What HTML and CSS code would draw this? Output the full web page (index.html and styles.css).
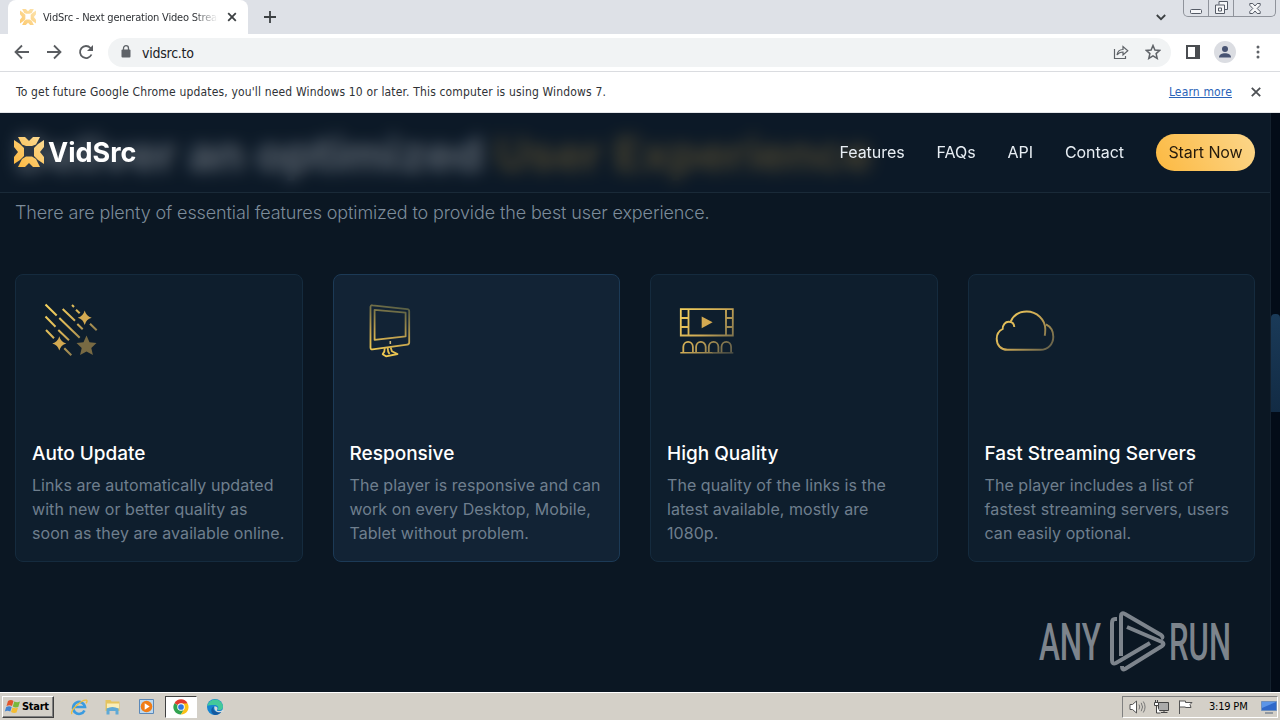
FILE: index.html
```html
<!DOCTYPE html>
<html lang="en">

<head>
    <meta charset="UTF-8">
    <meta name="viewport" content="width=device-width, initial-scale=1.0">
    <title>VidSrc - Next generation Video Streaming</title>
    <link rel="stylesheet" href="styles.css">
</head>

<body>
    <svg width="0" height="0" class="defs">
        <defs>
            <linearGradient id="gold" x1="0" y1="0" x2="60" y2="60" gradientUnits="userSpaceOnUse">
                <stop offset="0" stop-color="#ffdd60" />
                <stop offset="0.5" stop-color="#cfab55" />
                <stop offset="1" stop-color="#444a48" />
            </linearGradient>
            <linearGradient id="goldUp" x1="14" y1="54" x2="30" y2="0" gradientUnits="userSpaceOnUse">
                <stop offset="0" stop-color="#f7d052" />
                <stop offset="0.4" stop-color="#c2a24f" />
                <stop offset="1" stop-color="#505a44" />
            </linearGradient>
            <linearGradient id="logo" x1="0" y1="1" x2="1" y2="0">
                <stop offset="0" stop-color="#fdb73c" />
                <stop offset="1" stop-color="#fbdc97" />
            </linearGradient>
            <symbol id="mark" viewBox="0 0 30 30">
                <path fill="url(#logo)" d="M4 0h7l4 4 4-4h7l-4 7.500-4 1.500h-6L8 7.500zM4 30h7l4-4 4 4h7l-4-8-4-2.500h-6L8 22zM0 3l6 4 4 4v8l-4 4-6 4v-7l4-5-4-5zM30 3l-6 4-4 4v8l4 4 6 4v-7l-4-5 4-5z" />
            </symbol>
        </defs>
    </svg>

    <div class="screen">
        <div class="tab-strip">
            <div class="tab">
                <svg class="favicon" width="16" height="16"><use href="#mark" /></svg>
                <span class="tab-title">VidSrc - Next generation Video Streaming</span>
                <svg class="tab-close" width="10" height="10" viewBox="0 0 10 10"><path d="M1.2 1.2l7.6 7.6M8.8 1.2L1.2 8.8" /></svg>
            </div>
            <svg class="new-tab" width="12" height="12" viewBox="0 0 12 12"><path d="M6 0v12M0 6h12" /></svg>
            <svg class="tab-search" width="10" height="7" viewBox="0 0 10 7"><path d="M.8 1L5 5.2 9.200 1" /></svg>
            <div class="window-buttons">
                <span class="win-btn win-min"><svg width="12" height="5" viewBox="0 0 12 5"><rect x=".5" y=".5" width="11" height="4" rx="1" /></svg></span>
                <span class="win-btn win-max"><svg width="13" height="13" viewBox="0 0 13 13"><path d="M4 3.500V.5h8.500v8h-3M.5 4h9v8.500h-9zM3.500 7h3v3h-3z" /></svg></span>
                <span class="win-btn win-close"><svg width="12" height="11" viewBox="0 0 12 11"><path d="M.8.5h3L6 3 8.200.5h3v1.800L8.200 5.500l3 3v2h-3L6 8l-2.200 2.500h-3v-2l3-3-3-3.200z" /></svg></span>
            </div>
        </div>

        <div class="toolbar">
            <svg class="nav-icon" width="16" height="16" viewBox="0 0 16 16"><path d="M15 8H2M8 1.500L1.500 8 8 14.500" /></svg>
            <svg class="nav-icon" width="16" height="16" viewBox="0 0 16 16"><path d="M1 8h13M8 1.500L14.500 8 8 14.500" /></svg>
            <svg class="nav-icon" width="16" height="16" viewBox="0 0 16 16"><path d="M13.500 10.500A6 6 0 1 1 12.500 4L14 5.500" /><path class="solid" d="M15 1v6H9z" /></svg>
            <div class="omnibox">
                <svg width="10" height="13" viewBox="0 0 10 13"><rect x=".5" y="4.500" width="9" height="8" rx="1" fill="#5f6368" /><path d="M2.500 5V3.200a2.500 2.500 0 0 1 5 0V5" fill="none" stroke="#5f6368" stroke-width="1.300" /></svg>
                <span class="url">vidsrc.to</span>
                <svg class="share" width="16" height="16" viewBox="0 0 16 16"><path d="M1.500 5v9.500h11V12M4 11c.5-3.500 2.500-5.500 6-5.500V2.500l4.800 4.300L10 11V8C7.500 8 5.500 9 4 11z" /></svg>
                <svg class="star" width="16" height="16" viewBox="0 0 16 16"><path d="M8 1.500l1.900 4.500 4.800.4-3.600 3.200 1.100 4.800L8 11.800l-4.200 2.600 1.100-4.800L1.300 6.400 6.100 6z" /></svg>
            </div>
            <svg class="side-panel" width="14" height="14" viewBox="0 0 14 14"><path d="M1 1h12v12H1z" fill="none" stroke="#4a4d51" stroke-width="2" /><path d="M9 1h4v12H9z" fill="#4a4d51" /></svg>
            <span class="avatar"><svg width="14" height="14" viewBox="0 0 14 14"><circle cx="7" cy="4" r="3" /><path d="M1 12.500c0-3 3-4.300 6-4.300s6 1.300 6 4.300z" /></svg></span>
            <svg class="dots" width="4" height="14" viewBox="0 0 4 14"><circle cx="2" cy="2" r="1.500" /><circle cx="2" cy="7" r="1.500" /><circle cx="2" cy="12" r="1.500" /></svg>
        </div>

        <div class="infobar">
            <span class="info-text">To get future Google Chrome updates, you'll need Windows 10 or later. This computer is using Windows 7.</span>
            <a class="info-link" href="#">Learn more</a>
            <svg width="10" height="10" viewBox="0 0 10 10"><path d="M.8.8l8.400 8.400M9.200.8L.8 9.200" /></svg>
        </div>

        <div class="viewport">
            <header class="site-header">
                <a class="brand">
                    <svg width="30" height="30"><use href="#mark" /></svg>
                    <span>VidSrc</span>
                </a>
                <nav class="site-nav">
                    <a>Features</a>
                    <a>FAQs</a>
                    <a>API</a>
                    <a>Contact</a>
                </nav>
                <a class="start-btn">Start Now</a>
            </header>

            <main class="content">
                <h2 class="heading">Deliver an optimized <span>User Experience</span></h2>
                <p class="lead">There are plenty of essential features optimized to provide the best user experience.</p>

                <div class="cards">
                    <article class="card">
                        <svg class="card-icon" width="64" height="60" viewBox="0 0 64 60">
                            <g fill="none" stroke="url(#gold)" stroke-width="2">
                                <path d="M5.500 4.500l11.200 11M22.700 9L35 20.700M32 5l2 2M36 9.700l3.700 3.600M19.300 18l20.400 19.700M37.300 24l5.400 5.300M50 23.700l6.700 6.500M5.500 16.500l10 10.200M6 30l8 8.300M18.300 30L29 40.300M24.300 48.300l7 7" />
                            </g>
                            <path fill="#d3a951" d="M44.700 10.500q1.400 5.600 7 7.200-5.600 1.600-7 7.200-1.400-5.600-7-7.200 5.600-1.600 7-7.200z" />
                            <path fill="#d3a951" d="M19.300 36.200q1.400 5.600 7 7.200-5.600 1.600-7 7.200-1.400-5.600-7-7.200 5.600-1.600 7-7.200z" />
                            <path fill="#786a43" d="M46.500 35.500l3 6.800 7 .8-5.200 4.900 1.600 7-6.400-3.500-6.400 3.500 1.600-7-5.200-4.900 7-.8z" />
                        </svg>
                        <div class="card-text">
                            <h3>Auto Update</h3>
                            <p>Links are automatically updated with new or better quality as soon as they are available online.</p>
                        </div>
                    </article>

                    <article class="card active">
                        <svg class="card-icon" width="64" height="60" viewBox="0 0 64 60">
                            <g fill="none" stroke="url(#goldUp)" stroke-width="1.800" stroke-linejoin="round">
                                <path d="M14.500 5.300l34.700 3.900q2 .3 2 2v31.300q0 1.800-2 2.100l-34.700 4.800q-2 .2-2-1.800V7q0-2 2-1.700z" />
                                <path d="M16.600 9.800l31 2.900v23.600l-31 3.500z" />
                                <path d="M26.700 48.200q.3 3.500-2 6l3.300 2.100 11.500-2.300-5.600-2.800-1.200-3.800M29.700 48q0 4 1.800 6" />
                            </g>
                            <path d="M32.300 41v3" stroke="#cdb879" stroke-width="1.600" />
                        </svg>
                        <div class="card-text">
                            <h3>Responsive</h3>
                            <p>The player is responsive and can work on every Desktop, Mobile, Tablet without problem.</p>
                        </div>
                    </article>

                    <article class="card">
                        <svg class="card-icon" width="64" height="60" viewBox="0 0 64 60">
                            <g fill="none" stroke="url(#gold)" stroke-width="1.800">
                                <path d="M5.800 9.200h52v26.300h-52zM13.500 9v26.500M51 9v26.500M6 18h7.500M6 27h7.500M51 18h7M51 27h7" />
                                <path d="M8.300 52.500v-5.500a4.800 5.200 0 0 1 9.600 0v5.500M21.100 52.500v-5.500a4.800 5.200 0 0 1 9.600 0v5.500M33.800 52.500v-5.500a4.800 5.200 0 0 1 9.600 0v5.500M46.500 52.500v-5.500a4.800 5.200 0 0 1 9.600 0v5.500" />
                                <path d="M5.300 52.800h32" stroke-width="1.500" />
                                <path d="M37 52.900h21.300" stroke-width="1.200" />
                            </g>
                            <path fill="#d3a951" d="M26.700 16.500l10.900 5.800-10.900 6z" />
                        </svg>
                        <div class="card-text">
                            <h3>High Quality</h3>
                            <p>The quality of the links is the latest available, mostly are 1080p.</p>
                        </div>
                    </article>

                    <article class="card">
                        <svg class="card-icon" width="64" height="60" viewBox="0 0 64 60">
                            <g fill="none" stroke="url(#gold)" stroke-width="1.900">
                                <path d="M53 24.300c4.600 2.200 7.300 7 7.300 12.500 0 7.500-5.400 13-12.800 13h-33c-6.500 0-10.800-4.500-10.800-11 0-4.500 2.300-8 6-9.800 0-4 2.500-7.200 6-7.200 3.200 0 5.400 2 5.600 5.200" />
                                <path d="M17.700 21.500c2.800-6 8.800-10 16-10 10 0 18.600 8.100 18.600 17.800 0 2.200-.1 4.300-.6 6.400" />
                            </g>
                        </svg>
                        <div class="card-text">
                            <h3>Fast Streaming Servers</h3>
                            <p>The player includes a list of fastest streaming servers, users can easily optional.</p>
                        </div>
                    </article>
                </div>
            </main>

            <div class="scrollbar"><div class="thumb"></div></div>

            <svg class="watermark" width="200" height="64" viewBox="0 0 200 64">
                <text x="3" y="50" textLength="62" lengthAdjust="spacingAndGlyphs">ANY</text>
                <text x="133" y="50" textLength="62" lengthAdjust="spacingAndGlyphs">RUN</text>
                <path d="M81 9h-2q-3 0-3 4v37q0 5 4 3l34-20M85 46V6q0-4 4-2l36 21q3 2 0 3.500M91 17l35 15q3 2 0 4L89 59q-3 1.500-3-3" />
            </svg>
        </div>

        <div class="taskbar">
            <div class="start">
                <svg width="17" height="15" viewBox="0 0 17 15">
                    <path fill="#e2562b" d="M4 2q3-2 5.500 0L8 7Q5.500 5.500 2.500 7z" />
                    <path fill="#79b83b" d="M10.300 2.500q3 1.500 5.700 0L14.300 8q-3 1-5.500-.5z" />
                    <path fill="#4384d0" d="M2.200 8q3-1.500 5.500 0l-1.400 4.500q-2.800-1.500-5.500 0z" />
                    <path fill="#f4bd32" d="M8.500 8.500q2.800 1.300 5.500.3l-1.500 4.700q-2.700 1-5.500-.5z" />
                </svg>
                <span>Start</span>
            </div>
            <div class="quick-launch">
                <span class="launcher">
                    <svg width="18" height="18" viewBox="0 0 18 18"><path d="M14.500 12.500A6 6 0 1 1 15 9H4" fill="none" stroke="#3a9be0" stroke-width="2.600" /><path d="M2 16C-1 13 12 1 16.500 2.200c1 .5.500 2-.5 3" fill="none" stroke="#f0bf3c" stroke-width="1.300" /></svg>
                </span>
                <span class="launcher">
                    <svg width="18" height="18" viewBox="0 0 18 18"><path d="M1.500 2h5l1 1.500h8V13h-14z" fill="#e5c45f" /><path d="M3 5.500h12v5H3z" fill="#f9edb8" /><path d="M2.500 16.500V10.500q6-3 12 0v6h-3v-3.500h-6v3.500z" fill="#5fa9d6" /></svg>
                </span>
                <span class="launcher">
                    <svg width="18" height="18" viewBox="0 0 18 18"><path d="M1.500 1.500h14v14h-14z" fill="#bcd9f0" stroke="#5b88b8" /><circle cx="8.500" cy="8.500" r="5.800" fill="#f07d17" /><path d="M6.700 5.200l5 3.300-5 3.300z" fill="#fff" /></svg>
                </span>
                <span class="launcher pressed">
                    <svg width="16" height="16" viewBox="0 0 18 18"><path d="M9 9L1.600 4.700A8.500 8.500 0 0 1 16.400 4.700z" fill="#e33b2e" /><path d="M9 9L1.600 4.700A8.500 8.500 0 0 0 9 17.500l4-6.500z" fill="#32a350" /><path d="M9 5h7.500A8.500 8.500 0 0 1 9 17.500l3.700-6.500z" fill="#fbc116" /><circle cx="9" cy="9" r="4.200" fill="#fff" /><circle cx="9" cy="9" r="3.200" fill="#2f76e0" /></svg>
                </span>
                <span class="launcher">
                    <svg width="18" height="18" viewBox="0 0 18 18"><circle cx="9" cy="9" r="8" fill="#1685d1" /><path d="M1.200 8A8 8 0 0 1 17 8.500c0 3-2.500 4-5.500 3.500 2-2.500 0-5-3-5C5 7 2 7 1.200 8z" fill="#43c99a" /><path d="M8 8.500c-2 4 2 6.500 7.500 5A8 8 0 0 1 9 17c-4.500-1-5-7-1-8.500z" fill="#1459a0" /><path d="M8.500 8.300q3 .2 3 2.200c0 1-1 1.300-.5 2.200 2 .7 4.500.3 6-1.200l1 2-4 .8c-4 .5-6.500-3-5.500-6z" fill="#d6dcdc" /></svg>
                </span>
            </div>
            <div class="tray">
                <svg width="17" height="16" viewBox="0 0 17 16"><path d="M1 5.500h2.500L7.500 2v12l-4-3.500H1z" fill="#fff" stroke="#555" /><path d="M10 5.500q1.500 2.500 0 5M12.200 3.800q2.700 4.200 0 8.400M14.300 2.500q3.500 5.500 0 11" fill="none" stroke="#777" /></svg>
                <svg width="17" height="16" viewBox="0 0 17 16"><path d="M5.500 3.500h10v8h-10zM8 13.500h6.500M11 11.500v2" fill="#aaa" stroke="#444" /><path d="M1.500 3.500h4v3h-4zM2.500 1v2.500M4.500 1v2.500M3.500 6.500v7.500h4" fill="#fff" stroke="#444" /></svg>
                <svg width="17" height="16" viewBox="0 0 17 16"><path d="M2.500 15V1.500M2.500 2h6v1.500h6.500l-2 2 1 3H8.500V8h-6z" fill="#fff" stroke="#555" /></svg>
                <span class="clock">3:19 PM</span>
                <svg width="16" height="14" viewBox="0 0 16 14"><path d="M.5 1.500h15v9H.5z" fill="#2f68c9" stroke="#6f90bd" /><path d="M1 2h14L1 8z" fill="#5b95e8" /><path d="M4 13h8" stroke="#7d8794" stroke-width="1.500" /></svg>
            </div>
        </div>
    </div>
</body>

</html>
```
FILE: styles.css
```css
* {
    box-sizing: border-box;
}

body {
    margin: 0;
    font-family: "Inter", sans-serif;
    background-color: #0b1723;
    overflow: hidden;
}

h2, h3, p {
    margin: 0;
}

svg {
    flex: none;
    display: block;
}

.defs {
    position: absolute;
}

.screen {
    display: flex;
    flex-direction: column;
    width: 1280px;
    height: 720px;
}

/* browser chrome */
.tab-strip {
    display: flex;
    height: 34px;
    background-color: #dee1e7;
    padding-left: 8px;
}

.tab {
    display: flex;
    align-items: center;
    width: 240px;
    background-color: #fff;
    border-radius: 8px 8px 0 0;
    padding: 0 11px 0 12px;
}

.favicon {
    opacity: 0.75;
}

.tab-title {
    width: 176px;
    margin: 0 9px 0 7px;
    overflow: hidden;
    white-space: nowrap;
    font-family: "DejaVu Sans Condensed", "DejaVu Sans", sans-serif;
    font-size: 11px;
    letter-spacing: -0.2px;
    color: #303337;
    -webkit-mask-image: linear-gradient(to right, #000 86%, transparent);
    mask-image: linear-gradient(to right, #000 86%, transparent);
}

.tab-close path,
.new-tab path,
.tab-search path {
    fill: none;
    stroke: #3c4043;
    stroke-width: 1.8;
}

.new-tab {
    margin: 11px 0 0 16px;
}

.tab-search {
    margin: 14px 17px 0 auto;
}

.window-buttons {
    display: flex;
    width: 93px;
    height: 17px;
    margin-right: 4px;
    border: 1px solid #8f939b;
    border-top: none;
    border-radius: 0 0 5px 5px;
}

.win-btn {
    display: flex;
    justify-content: center;
    align-items: flex-end;
    padding-bottom: 2px;
    width: 25px;
    border-right: 1px solid #8f939b;
}

.win-close {
    flex: 1;
    border-right: none;
}

.win-btn svg {
    fill: #f5f6f8;
    stroke: #555b66;
}

.toolbar {
    display: flex;
    align-items: center;
    height: 38px;
    padding: 0 20px 0 14px;
    background-color: #fff;
    border-bottom: 1px solid #dadce0;
}

.nav-icon {
    margin: -2px 16px 0 0;
    fill: none;
    stroke: #5a5d61;
    stroke-width: 1.8;
}

.nav-icon:nth-child(3) {
    margin-right: 14px;
}

.nav-icon .solid {
    fill: #5a5d61;
    stroke: none;
}

.omnibox {
    display: flex;
    align-items: center;
    width: 1065px;
    height: 29px;
    margin-right: 15px;
    padding: 0 10px 0 13px;
    border-radius: 15px;
    background-color: #f1f3f4;
}

.omnibox svg {
    margin-top: -2px;
}

.url {
    margin-left: 11px;
    font-family: "DejaVu Sans Condensed", "DejaVu Sans", sans-serif;
    font-size: 14px;
    letter-spacing: -0.25px;
    color: #202124;
}

.share,
.star {
    fill: none;
    stroke: #5f6368;
    stroke-width: 1.2;
}

.share {
    margin-left: auto;
    margin-right: 16px;
}

.star {
    stroke-width: 1.5;
}

.side-panel {
    margin-top: -2px;
}

.avatar {
    display: flex;
    align-items: center;
    justify-content: center;
    width: 22px;
    height: 22px;
    margin: -2px 20px 0 14px;
    border-radius: 50%;
    background-color: #dbdde2;
    fill: #475372;
}

.dots {
    margin-top: -1px;
    fill: #5f6368;
}

.infobar {
    display: flex;
    align-items: center;
    height: 41px;
    padding: 0 19px 0 16px;
    background-color: #fff;
    border-bottom: 1px solid #e4e6e9;
    font-family: "DejaVu Sans Condensed", "DejaVu Sans", sans-serif;
    font-size: 12px;
    letter-spacing: 0.16px;
    color: #2f3236;
}

.info-link {
    margin: 0 19px 0 auto;
    color: #2a63b8;
}

.infobar svg path {
    stroke: #4d5054;
    stroke-width: 1.8;
}

/* site */
.viewport {
    position: relative;
    display: flex;
    height: 579px;
    overflow: hidden;
    background-color: #0b1723;
}

.site-header {
    position: absolute;
    z-index: 2;
    top: 0;
    left: 0;
    display: flex;
    align-items: center;
    width: 1270px;
    height: 80px;
    padding: 0 15px 1px 14px;
    background-color: rgba(13, 27, 41, 0.68);
    border-bottom: 1px solid #1a2a38;
    -webkit-backdrop-filter: blur(8px);
    backdrop-filter: blur(8px);
    color: #e8eef4;
}

.brand {
    display: flex;
    align-items: center;
    gap: 4px;
    font-size: 27px;
    font-weight: 700;
    color: #fff;
}

.site-nav {
    display: flex;
    gap: 32px;
    margin-left: auto;
    font-size: 16px;
    letter-spacing: -0.05px;
}

.start-btn {
    width: 99px;
    height: 37px;
    margin-left: 32px;
    border-radius: 19px;
    background: linear-gradient(60deg, #fcb941, #fcd68a);
    font-size: 16px;
    letter-spacing: -0.1px;
    line-height: 36px;
    text-align: center;
    color: #241a0c;
}

.content {
    width: 1270px;
    padding: 12px 15px 0;
}

.heading {
    height: 74px;
    line-height: 58px;
    font-size: 47px;
    font-weight: 700;
    white-space: nowrap;
    color: #fff;
}

.heading span {
    color: #c79a3f;
}

.lead {
    height: 75px;
    line-height: 28px;
    font-size: 18px;
    font-weight: 300;
    letter-spacing: -0.12px;
    color: #7d8c9a;
}

.cards {
    display: grid;
    grid-template-columns: repeat(4, 1fr);
    gap: 30px;
}

.card {
    display: flex;
    flex-direction: column;
    justify-content: space-between;
    height: 288px;
    padding: 25px 16px 16px;
    border: 1px solid #152b3e;
    border-radius: 8px;
    background-color: #0e1e2d;
}

.card.active {
    background-color: #122335;
    border-color: #1c3a56;
}

.card-icon {
    margin-left: 8px;
}

.card h3 {
    margin-bottom: 5px;
    font-size: 19px;
    font-weight: 500;
    line-height: 28px;
    color: #fff;
}

.card p {
    font-size: 16px;
    letter-spacing: 0.06px;
    line-height: 24px;
    color: #6f7f8e;
}

.scrollbar {
    width: 10px;
    padding-top: 201px;
    background-color: #030c18;
    border-left: 1px solid #14212e;
}

.thumb {
    height: 98px;
    border-radius: 4px 4px 0 0;
    background: linear-gradient(#1a3a58, #122b44);
}

.watermark {
    position: absolute;
    right: 44px;
    bottom: 18px;
}

.watermark text {
    font-family: "Roboto", sans-serif;
    font-size: 52px;
    font-weight: 500;
    fill: #7d848c;
}

.watermark path {
    fill: none;
    stroke: #7d848c;
    stroke-width: 4;
}

/* windows taskbar */
.taskbar {
    display: flex;
    align-items: center;
    height: 28px;
    border-top: 1px solid #fff;
    background-color: #d4d0c8;
    font-family: "DejaVu Sans Condensed", "DejaVu Sans", sans-serif;
    font-size: 11px;
    color: #000;
}

.start {
    display: flex;
    align-items: center;
    gap: 1px;
    width: 52px;
    height: 22px;
    margin-left: 2px;
    padding-left: 1px;
    border: 1px solid;
    border-color: #fff #404040 #404040 #fff;
    box-shadow: inset -1px -1px #808080;
    font-weight: 700;
    letter-spacing: -0.3px;
}

.quick-launch {
    display: flex;
    gap: 2px;
    margin-left: 9px;
}

.launcher {
    display: flex;
    align-items: center;
    justify-content: center;
    width: 32px;
    height: 22px;
}

.launcher.pressed {
    background-color: #fff;
    border: 1px solid;
    border-color: #404040 #fff #fff #404040;
}

.tray {
    display: flex;
    align-items: center;
    gap: 7px;
    width: 156px;
    height: 22px;
    margin: 0 2px 0 auto;
    padding-left: 6px;
    border: 1px solid;
    border-color: #808080 #fff #fff #808080;
}

.clock {
    width: 43px;
    margin: 0 4px 0 8px;
    letter-spacing: -0.2px;
    white-space: nowrap;
}
```
